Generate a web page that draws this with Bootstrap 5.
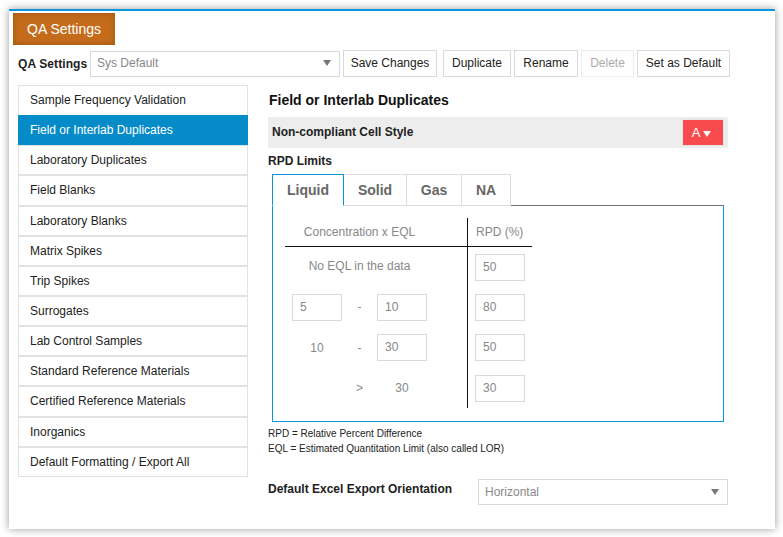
<!DOCTYPE html>
<html lang="en">
<head>
    <meta charset="UTF-8">
    <meta name="viewport" content="width=device-width, initial-scale=1.0">
    <title>QA Settings</title>
    <link href="https://cdn.jsdelivr.net/npm/bootstrap@5.3.0/dist/css/bootstrap.min.css" rel="stylesheet">
    <style>
        body {
            background: #fff;
            font-family: "Liberation Sans", Arial, sans-serif;
            font-size: 12px;
            color: #222;
            height: 537px;
            overflow: hidden;
            padding: 9px 8px 8px 9px;
        }

        .qa-panel {
            height: 520px;
            background: #fff;
            border-top: 2px solid #0a96d8;
            box-shadow: 0 0 8px rgba(0, 0, 0, 0.4);
            padding: 2px 0 0 4px;
        }

        .qa-title {
            width: 102px;
            height: 32px;
            line-height: 32px;
            text-align: center;
            color: #fff;
            font-size: 14px;
            background: #c56c1c;
            box-shadow: inset 0 0 6px rgba(120, 60, 0, 0.5);
        }

        .qa-toolbar {
            margin: 5px 0 8px 5px;
            height: 27px;
        }

        .qa-label {
            font-weight: 700;
            width: 72px;
            letter-spacing: 0.1px;
        }

        .fake-select {
            height: 26px;
            border: 1px solid #d9d9d9;
            padding: 0 7px 1px 6px;
            color: #888;
            background: #fff;
        }

        .fake-select .caret-down {
            border-top-color: #777;
            margin-right: 1px;
        }

        .caret-down {
            width: 0;
            height: 0;
            border-left: 4px solid transparent;
            border-right: 4px solid transparent;
            border-top: 6px solid #fff;
            display: inline-block;
        }

        .qa-btn {
            height: 27px;
            padding: 0 0 2px;
            font-size: 12px;
            color: #222;
            border: 1px solid #d9d9d9;
            border-radius: 0;
            background: #fff;
        }

        .qa-btn:disabled {
            color: #aaa;
            border-color: #ececec;
            opacity: 1;
        }

        .qa-side {
            width: 230px;
            margin-left: 5px;
            flex: none;
        }

        .qa-side .list-group-item {
            height: 30.15px;
            padding: 0 11px;
            line-height: 28px;
            font-size: 12px;
            color: #222;
            border: 1px solid #e2e2e2;
            border-radius: 0;
            margin: 0;
        }

        .qa-side .list-group-item:first-child {
            height: 31.1px;
        }

        .qa-side .list-group-item.active {
            background: #068bc9;
            border-color: #068bc9;
            color: #fff;
        }

        .qa-main {
            margin-left: 20px;
            width: 460px;
        }

        .qa-heading {
            font-size: 14px;
            font-weight: 700;
            margin: -1px 0 0 1px;
            height: 16px;
            line-height: 16px;
            color: #111;
        }

        .cell-bar {
            height: 31px;
            margin-top: 9px;
            background: #ededed;
            padding: 0 4px;
            font-weight: 700;
        }

        .cell-name {
            padding-bottom: 2px;
        }

        .cell-btn {
            width: 42px;
            height: 27px;
            background: #f84b4e;
            border: 1px solid #e4e4e4;
            color: #fff;
            font-size: 13px;
            padding: 0 3px 0 0;
            border-radius: 0;
        }

        .rpd-label {
            font-weight: 700;
            margin: 6px 0 6px;
            line-height: 14px;
        }

        .qa-tabs {
            margin-left: 4px;
            width: 452px;
            height: 32px;
            border-bottom: 1px solid #6d7275;
        }

        .qa-tabs .nav-link {
            height: 32px;
            padding: 0;
            line-height: 31px;
            text-align: center;
            font-size: 14px;
            font-weight: 700;
            color: #666;
            border: 1px solid #ddd;
            border-left-width: 0;
            border-radius: 0;
            background: #fff;
        }

        .qa-tabs .nav-link.active {
            color: #666;
            border: 1px solid #0a96d8;
            border-bottom-color: #fff;
        }

        .qa-tabpane {
            margin-left: 4px;
            width: 452px;
            height: 216px;
            border: 1px solid #0a96d8;
            border-top: 0;
            padding: 12px 0 0 12px;
        }

        .rpd-grid {
            display: grid;
            width: 247px;
            grid-template-columns: 183px 64px;
            grid-template-rows: 29px 40px 40px 41px 40px;
            color: #888;
        }

        .rpd-left {
            border-right: 1px solid #111;
            padding: 0 0 0 7px;
        }

        .rpd-right {
            padding-left: 7px;
        }

        .rpd-head {
            border-bottom: 1px solid #111;
        }

        .rpd-center {
            padding-right: 40px;
        }

        .rpd-noeql {
            padding-bottom: 2px;
        }

        .rpd-input {
            width: 50px;
            height: 27px;
            border: 1px solid #d9d9d9;
            padding: 0 7px;
            line-height: 24px;
            color: #888;
        }

        .rpd-dash {
            width: 35px;
            text-align: center;
        }

        .rpd-val {
            width: 50px;
            text-align: center;
        }

        .qa-notes {
            font-size: 10px;
            line-height: 15px;
            margin-top: 4px;
            color: #222;
        }

        .qa-export {
            margin-top: 23px;
        }

        .qa-export-label {
            font-weight: 700;
            width: 210px;
            padding-bottom: 6px;
        }
    </style>
</head>
<body>
    <div class="qa-panel">
        <div class="qa-title">QA Settings</div>

        <!-- Toolbar -->
        <div class="qa-toolbar d-flex align-items-center">
            <div class="qa-label">QA Settings</div>
            <div class="fake-select d-flex align-items-center justify-content-between" style="width: 250px;">
                <span>Sys Default</span><span class="caret-down"></span>
            </div>
            <button class="btn qa-btn" style="width: 94px; margin-left: 3px;">Save Changes</button>
            <button class="btn qa-btn" style="width: 68px; margin-left: 6px;">Duplicate</button>
            <button class="btn qa-btn" style="width: 64px; margin-left: 3px;">Rename</button>
            <button class="btn qa-btn" style="width: 53px; margin-left: 3px;" disabled>Delete</button>
            <button class="btn qa-btn" style="width: 93px; margin-left: 3px;">Set as Default</button>
        </div>

        <div class="d-flex">
            <!-- Side menu -->
            <div class="qa-side list-group">
                <a class="list-group-item">Sample Frequency Validation</a>
                <a class="list-group-item active">Field or Interlab Duplicates</a>
                <a class="list-group-item">Laboratory Duplicates</a>
                <a class="list-group-item">Field Blanks</a>
                <a class="list-group-item">Laboratory Blanks</a>
                <a class="list-group-item">Matrix Spikes</a>
                <a class="list-group-item">Trip Spikes</a>
                <a class="list-group-item">Surrogates</a>
                <a class="list-group-item">Lab Control Samples</a>
                <a class="list-group-item">Standard Reference Materials</a>
                <a class="list-group-item">Certified Reference Materials</a>
                <a class="list-group-item">Inorganics</a>
                <a class="list-group-item">Default Formatting / Export All</a>
            </div>

            <!-- Main section -->
            <div class="qa-main pt-2">
                <div class="qa-heading">Field or Interlab Duplicates</div>
                <div class="cell-bar d-flex align-items-center justify-content-between">
                    <span class="cell-name">Non-compliant Cell Style</span>
                    <button class="btn cell-btn">A <span class="caret-down"></span></button>
                </div>
                <div class="rpd-label">RPD Limits</div>

                <ul class="nav qa-tabs">
                    <li class="nav-item"><a class="nav-link active" style="width: 72px;">Liquid</a></li>
                    <li class="nav-item"><a class="nav-link" style="width: 63px;">Solid</a></li>
                    <li class="nav-item"><a class="nav-link" style="width: 55px;">Gas</a></li>
                    <li class="nav-item"><a class="nav-link" style="width: 49px;">NA</a></li>
                </ul>
                <div class="qa-tabpane">
                    <div class="rpd-grid">
                        <div class="rpd-left rpd-head rpd-center d-flex align-items-center justify-content-center">Concentration x EQL</div>
                        <div class="rpd-right rpd-head d-flex align-items-center ps-2">RPD (%)</div>

                        <div class="rpd-left rpd-center rpd-noeql d-flex align-items-center justify-content-center">No EQL in the data</div>
                        <div class="rpd-right d-flex align-items-center"><div class="rpd-input">50</div></div>

                        <div class="rpd-left d-flex align-items-center">
                            <div class="rpd-input">5</div><div class="rpd-dash">-</div><div class="rpd-input">10</div>
                        </div>
                        <div class="rpd-right d-flex align-items-center"><div class="rpd-input">80</div></div>

                        <div class="rpd-left d-flex align-items-center">
                            <div class="rpd-val">10</div><div class="rpd-dash">-</div><div class="rpd-input">30</div>
                        </div>
                        <div class="rpd-right d-flex align-items-center"><div class="rpd-input">50</div></div>

                        <div class="rpd-left d-flex align-items-center">
                            <div class="rpd-val"></div><div class="rpd-dash">&gt;</div><div class="rpd-val">30</div>
                        </div>
                        <div class="rpd-right d-flex align-items-center"><div class="rpd-input">30</div></div>
                    </div>
                </div>

                <div class="qa-notes">
                    <div>RPD = Relative Percent Difference</div>
                    <div>EQL = Estimated Quantitation Limit (also called LOR)</div>
                </div>

                <div class="qa-export d-flex align-items-center">
                    <div class="qa-export-label">Default Excel Export Orientation</div>
                    <div class="fake-select flex-grow-1 d-flex align-items-center justify-content-between">
                        <span>Horizontal</span><span class="caret-down"></span>
                    </div>
                </div>
            </div>
        </div>
    </div>

    <script src="https://cdn.jsdelivr.net/npm/bootstrap@5.3.0/dist/js/bootstrap.bundle.min.js"></script>
</body>
</html>
